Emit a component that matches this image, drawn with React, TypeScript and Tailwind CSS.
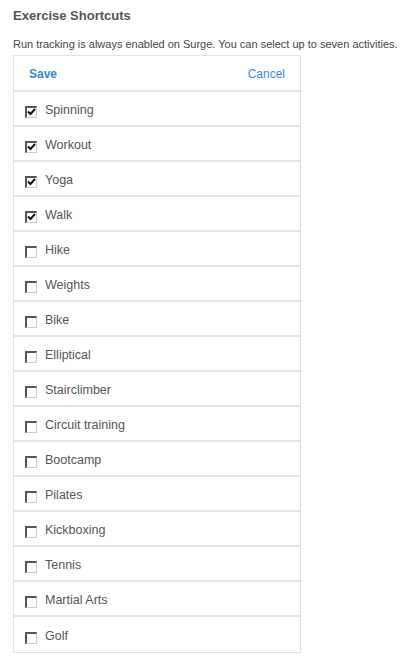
const activities = [
  { name: "Spinning", checked: true },
  { name: "Workout", checked: true },
  { name: "Yoga", checked: true },
  { name: "Walk", checked: true },
  { name: "Hike", checked: false },
  { name: "Weights", checked: false },
  { name: "Bike", checked: false },
  { name: "Elliptical", checked: false },
  { name: "Stairclimber", checked: false },
  { name: "Circuit training", checked: false },
  { name: "Bootcamp", checked: false },
  { name: "Pilates", checked: false },
  { name: "Kickboxing", checked: false },
  { name: "Tennis", checked: false },
  { name: "Martial Arts", checked: false },
  { name: "Golf", checked: false },
];

function Box({ checked }: { checked: boolean }) {
  return (
    <span className="mt-[2px] w-[12px] h-[12px] border-t-2 border-l-2 border-r border-b border-t-[#555] border-l-[#555] border-r-[#ccc] border-b-[#ccc] bg-white flex items-center justify-center">
      {checked && (
        <svg width="9" height="8" viewBox="0 0 9 8">
          <path d="M1 3.5 L3.5 6 L8 1" stroke="#111" strokeWidth="2" fill="none" />
        </svg>
      )}
    </span>
  );
}

export default function App() {
  return (
    <div className="bg-white min-h-screen pl-[13px] pt-[8px] font-['Liberation_Sans',Arial,sans-serif]">
      <h2 className="text-[13px] font-bold text-[#555] leading-[16px]">Exercise Shortcuts</h2>
      <p className="text-[11px] text-[#444] mt-[14px] leading-[13px] whitespace-nowrap">
        Run tracking is always enabled on Surge. You can select up to seven activities.
      </p>
      <div className="mt-[4px] w-[288px] border border-[#e2e2e2]">
        <div className="flex justify-between items-center h-[36px] pt-[2px] px-[15px] border-b-2 border-[#e5e5e5] text-[12px]">
          <span className="font-bold text-[#3b87d6]">Save</span>
          <span className="text-[#3b87d6]">Cancel</span>
        </div>
        {activities.map((a, i) => (
          <div
            key={a.name}
            className={
              "flex items-center h-[35px] pt-[4px] pl-[11px] gap-[8px] " +
              (i < activities.length - 1 ? "border-b-2 border-[#e5e5e5]" : "")
            }
          >
            <Box checked={a.checked} />
            <span className="text-[12.5px] text-[#555]">{a.name}</span>
          </div>
        ))}
      </div>
    </div>
  );
}
